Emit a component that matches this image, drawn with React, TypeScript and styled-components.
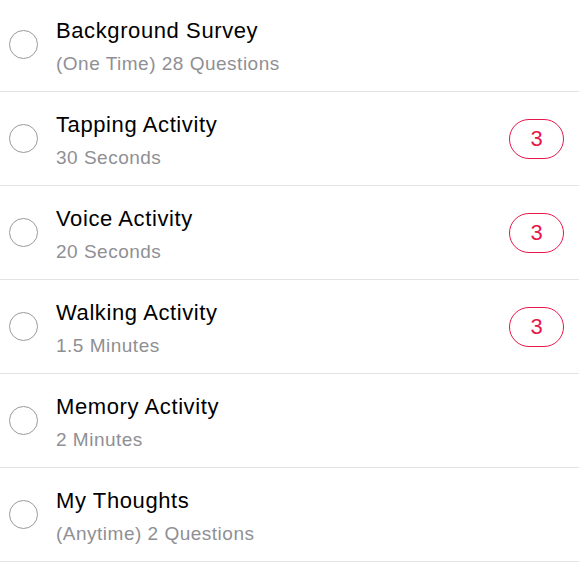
import React from "react";
import styled, { createGlobalStyle } from "styled-components";

const GlobalStyle = createGlobalStyle`
  html, body {
    margin: 0;
    padding: 0;
    background: #ffffff;
    overflow: hidden;
  }
  body {
    font-family: "Liberation Sans", Arial, Helvetica, sans-serif;
    -webkit-font-smoothing: antialiased;
  }
`;

const List = styled.ul`
  list-style: none;
  margin: -2px 0 0 0;
  padding: 0;
  width: 579px;
`;

const Row = styled.li`
  display: flex;
  align-items: center;
  height: 93px;
  border-bottom: 1px solid #e3e3e6;
  box-sizing: content-box;
`;

const Check = styled.div`
  width: 27px;
  height: 27px;
  border: 1.5px solid #9a9a9e;
  border-radius: 50%;
  margin-left: 9px;
  flex: none;
`;

const TextBlock = styled.div`
  flex: 1;
  display: flex;
  flex-direction: column;
  margin-left: 18px;
  align-self: flex-start;
  padding-top: 20px;
`;

const Title = styled.div`
  font-size: 22px;
  line-height: 26px;
  letter-spacing: 0.6px;
  color: #000000;
  margin-bottom: 8px;
`;

const Subtitle = styled.div`
  font-size: 19px;
  line-height: 24px;
  letter-spacing: 0.5px;
  color: #8f8f94;
`;

const Badge = styled.div`
  width: 53px;
  height: 38px;
  border: 1.5px solid #e6174b;
  border-radius: 21px;
  color: #e6174b;
  font-size: 22px;
  display: flex;
  align-items: center;
  justify-content: center;
  margin-right: 15px;
  flex: none;
`;

type Item = { title: string; subtitle: string; count?: number };

const items: Item[] = [
  { title: "Background Survey", subtitle: "(One Time) 28 Questions" },
  { title: "Tapping Activity", subtitle: "30 Seconds", count: 3 },
  { title: "Voice Activity", subtitle: "20 Seconds", count: 3 },
  { title: "Walking Activity", subtitle: "1.5 Minutes", count: 3 },
  { title: "Memory Activity", subtitle: "2 Minutes" },
  { title: "My Thoughts", subtitle: "(Anytime) 2 Questions" },
];

export default function App() {
  return (
    <>
      <GlobalStyle />
      <List>
        {items.map((it) => (
          <Row key={it.title}>
            <Check />
            <TextBlock>
              <Title>{it.title}</Title>
              <Subtitle>{it.subtitle}</Subtitle>
            </TextBlock>
            {it.count !== undefined && <Badge>{it.count}</Badge>}
          </Row>
        ))}
      </List>
    </>
  );
}
